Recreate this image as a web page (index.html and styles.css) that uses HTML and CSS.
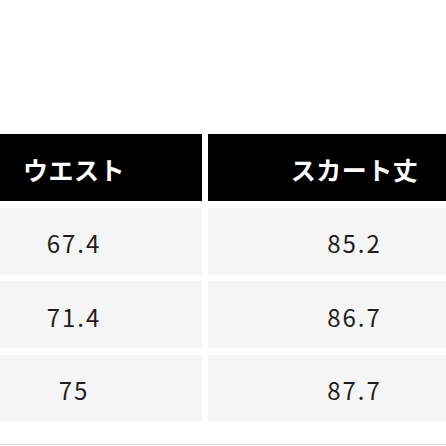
FILE: index.html
```html
<!DOCTYPE html>
<html lang="ja">
<head>
<meta charset="utf-8">
<link rel="stylesheet" href="styles.css">
</head>
<body>
<div class="page">
  <div class="size-table">
    <div class="cell col-a head">ウエスト</div>
    <div class="cell col-b head">スカート丈</div>
    <div class="cell col-a">67.4</div>
    <div class="cell col-b">85.2</div>
    <div class="cell col-a">71.4</div>
    <div class="cell col-b">86.7</div>
    <div class="cell col-a">75</div>
    <div class="cell col-b">87.7</div>
  </div>
  <div class="rule"></div>
</div>
</body>
</html>
```

FILE: styles.css
```css
html, body {
  margin: 0;
  padding: 0;
  background: #ffffff;
}
body {
  width: 446px;
  height: 446px;
  overflow: hidden;
  font-family: "Noto Sans CJK JP", "Noto Sans", sans-serif;
}
.page {
  padding-top: 134px;
}
.size-table {
  display: grid;
  grid-template-columns: 202px 1fr;
  grid-auto-rows: 67px;
  column-gap: 6px;
  row-gap: 6.6px;
}
.cell {
  display: flex;
  align-items: center;
  justify-content: center;
  background: #f5f5f5;
  color: #1e1e1e;
  font-size: 24px;
  letter-spacing: 2px;
  padding-top: 3px;
  box-sizing: border-box;
  white-space: nowrap;
}
.col-a {
  padding-right: 54px;
}
.col-b {
  padding-left: 55px;
}
.head {
  background: #000000;
  color: #ffffff;
  font-weight: 700;
  font-size: 25px;
  letter-spacing: 0.5px;
}
.rule {
  margin-top: 22px;
  height: 1px;
  background: #dcdcdc;
}
```
